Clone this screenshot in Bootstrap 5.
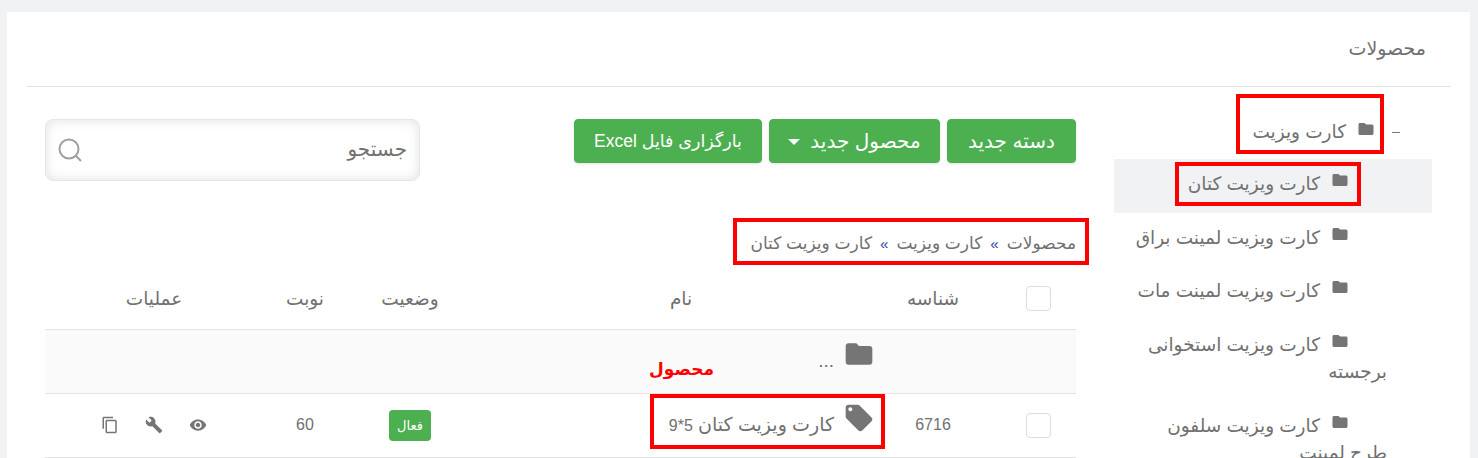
<!DOCTYPE html>
<html lang="fa" dir="rtl">
<head>
  <meta charset="UTF-8">
  <meta name="viewport" content="width=device-width, initial-scale=1.0">
  <title>محصولات</title>
  <link href="https://cdn.jsdelivr.net/npm/bootstrap@5.3.2/dist/css/bootstrap.min.css" rel="stylesheet">
  <style>
    html, body { height: 458px; overflow: hidden; }
    body { background: #f1f2f4; color: #707070; font-family: "Liberation Sans", "DejaVu Sans", sans-serif; font-size: 18px; }
    .sheet { position: relative; margin: 12px 8px 0 7px; height: 446px; background: #fff; overflow: hidden; }
    .sheet-head { margin: 0 19px 0 20px; height: 75px; padding: 24px 25px 0 0; border-bottom: 1px solid #e4e4e4; font-size: 19px; line-height: 26px; }
    .sheet-body { padding: 0 38px; gap: 38px; }
    .tree { width: 318px; flex: none; font-size: 18.5px; }
    .tree-top { height: 72px; padding: 32px 32px 0 0; line-height: 26px; gap: 19px; }
    .tree-dash { width: 8px; height: 1px; background: #777; margin-top: 13px; flex: none; }
    .tree-item { padding: 11px 45px 15px 19px; line-height: 27.5px; text-indent: 40px; }
    .tree-item.is-open { background: #f1f2f4; }
    .ico { fill: #757575; vertical-align: top; }
    .ico-folder { width: 18px; height: 18px; margin: 1px -2px 0 11px; }
    .content { flex: 1; min-width: 0; padding-top: 32px; }
    .btn-row { gap: 7px; }
    .btn-green { --bs-btn-bg: #4caf50; --bs-btn-border-color: #4caf50; --bs-btn-color: #fff; --bs-btn-hover-bg: #4caf50; --bs-btn-hover-border-color: #4caf50; --bs-btn-hover-color: #fff; --bs-btn-border-radius: 4px; height: 44px; padding: 0; font-size: 20px; box-shadow: 0 1px 3px rgba(0,0,0,.12); }
    .btn-new { width: 129px; }
    .btn-product { width: 171px; }
    .btn-product::after { margin-left: 0; margin-right: 10px; vertical-align: .15em; }
    .btn-excel { width: 188px; font-size: 17.5px; }
    .search-box { position: relative; width: 375px; height: 62px; }
    .search-box .form-control { height: 62px; padding: 0 12px 2px 12px; border: 1px solid #e6e6e6; border-radius: 8px; font-size: 20px; box-shadow: inset 0 0 12px rgba(0,0,0,.12); }
    .search-box .form-control::placeholder { color: #707070; }
    .search-ico { position: absolute; left: 12px; top: 18px; width: 26px; height: 26px; fill: none; stroke: #a0a0a0; stroke-width: 2; }
    .crumbs { margin-top: 50px; height: 38px; line-height: 26px; font-size: 17px; }
    .crumbs b { color: #2a3f9d; font-weight: 400; font-size: 15px; margin: 0 8px; }
    .data-table { table-layout: fixed; margin: 0; }
    .data-table th, .data-table td { text-align: center; vertical-align: middle; border-bottom: 1px solid #e4e4e4; padding: 0; font-weight: 400; color: #707070; }
    .data-table th { font-size: 18.5px; }
    .data-table thead tr { height: 60px; }
    .data-table tbody tr { height: 64px; }
    .col-check { width: 99px; }
    .col-id { width: 88px; }
    .col-name { width: 416px; }
    .col-state { width: 126px; }
    .col-turn { width: 84px; }
    .tick { width: 25px; height: 25px; border: 1px solid #ddd; border-radius: 4px; margin: 0 25px 0 auto; }
    .data-table td.num, .num { font-size: 16px; }
    .data-table td.cell-name { text-align: right; padding: 0 14px 0 0; font-size: 19px; }
    .ico-row { width: 32px; height: 32px; margin: -9px 0 0 9px; }
    .row-folder td { background: #fafafa; }
    .state { --bs-badge-font-size: 13px; --bs-badge-font-weight: 400; --bs-badge-padding-x: 8px; --bs-badge-padding-y: 9px; background: #4caf50; border-radius: 4px; }
    .tools { gap: 26px; }
    .ico-tool { width: 18px; height: 18px; }
    .mark-box { position: absolute; border: 4px solid #f00; pointer-events: none; }
    .mark-a { left: 1229px; top: 82px; width: 148px; height: 60px; }
    .mark-b { left: 1168px; top: 150px; width: 186px; height: 44px; }
    .mark-c { left: 726px; top: 206px; width: 356px; height: 47px; }
    .mark-d { left: 643px; top: 382px; width: 235px; height: 55px; }
    .mark-text { position: absolute; left: 642px; top: 345px; color: #f00; font-weight: 700; font-size: 17px; line-height: 26px; }
  </style>
</head>
<body>
  <div class="sheet">
    <div class="sheet-head">محصولات</div>

    <div class="sheet-body d-flex">
      <div class="tree">
        <div class="tree-top d-flex">
          <span class="tree-dash"></span>
          <span><svg class="ico ico-folder" viewBox="0 0 24 24"><path d="M10 4H4c-1.1 0-1.99.9-1.99 2L2 18c0 1.1.9 2 2 2h16c1.1 0 2-.9 2-2V8c0-1.1-.9-2-2-2h-8l-2-2z"/></svg>کارت ویزیت</span>
        </div>
        <div class="tree-item is-open"><svg class="ico ico-folder" viewBox="0 0 24 24"><path d="M10 4H4c-1.1 0-1.99.9-1.99 2L2 18c0 1.1.9 2 2 2h16c1.1 0 2-.9 2-2V8c0-1.1-.9-2-2-2h-8l-2-2z"/></svg>کارت ویزیت کتان</div>
        <div class="tree-item"><svg class="ico ico-folder" viewBox="0 0 24 24"><path d="M10 4H4c-1.1 0-1.99.9-1.99 2L2 18c0 1.1.9 2 2 2h16c1.1 0 2-.9 2-2V8c0-1.1-.9-2-2-2h-8l-2-2z"/></svg>کارت ویزیت لمینت براق</div>
        <div class="tree-item"><svg class="ico ico-folder" viewBox="0 0 24 24"><path d="M10 4H4c-1.1 0-1.99.9-1.99 2L2 18c0 1.1.9 2 2 2h16c1.1 0 2-.9 2-2V8c0-1.1-.9-2-2-2h-8l-2-2z"/></svg>کارت ویزیت لمینت مات</div>
        <div class="tree-item"><svg class="ico ico-folder" viewBox="0 0 24 24"><path d="M10 4H4c-1.1 0-1.99.9-1.99 2L2 18c0 1.1.9 2 2 2h16c1.1 0 2-.9 2-2V8c0-1.1-.9-2-2-2h-8l-2-2z"/></svg>کارت ویزیت استخوانی برجسته</div>
        <div class="tree-item"><svg class="ico ico-folder" viewBox="0 0 24 24"><path d="M10 4H4c-1.1 0-1.99.9-1.99 2L2 18c0 1.1.9 2 2 2h16c1.1 0 2-.9 2-2V8c0-1.1-.9-2-2-2h-8l-2-2z"/></svg>کارت ویزیت سلفون طرح لمینت</div>
      </div>

      <div class="content">
        <div class="d-flex justify-content-between align-items-start">
          <div class="d-flex btn-row">
            <button class="btn btn-green btn-new">دسته جدید</button>
            <button class="btn btn-green btn-product dropdown-toggle">محصول جدید</button>
            <button class="btn btn-green btn-excel">بارگزاری فایل Excel</button>
          </div>
          <div class="search-box">
            <input type="text" class="form-control" placeholder="جستجو">
            <svg class="search-ico" viewBox="0 0 26 26"><circle cx="12" cy="12" r="9.5"/><path d="M19 19l5 5"/></svg>
          </div>
        </div>

        <div class="crumbs">محصولات<b>»</b>کارت ویزیت<b>»</b>کارت ویزیت کتان</div>

        <table class="table data-table">
          <thead>
            <tr>
              <th class="col-check"><div class="tick"></div></th>
              <th class="col-id">شناسه</th>
              <th class="col-name">نام</th>
              <th class="col-state">وضعیت</th>
              <th class="col-turn">نوبت</th>
              <th>عملیات</th>
            </tr>
          </thead>
          <tbody>
            <tr class="row-folder">
              <td></td>
              <td></td>
              <td class="cell-name"><svg class="ico ico-row" viewBox="0 0 24 24"><path d="M10 4H4c-1.1 0-1.99.9-1.99 2L2 18c0 1.1.9 2 2 2h16c1.1 0 2-.9 2-2V8c0-1.1-.9-2-2-2h-8l-2-2z"/></svg>...</td>
              <td></td>
              <td></td>
              <td></td>
            </tr>
            <tr>
              <td><div class="tick"></div></td>
              <td class="num">6716</td>
              <td class="cell-name"><svg class="ico ico-row" viewBox="0 0 24 24"><path d="M21.41 11.58l-9-9C12.05 2.22 11.55 2 11 2H4c-1.1 0-2 .9-2 2v7c0 .55.22 1.05.59 1.42l9 9c.36.36.86.58 1.41.58.55 0 1.05-.22 1.41-.59l7-7c.37-.36.59-.86.59-1.41 0-.55-.23-1.06-.59-1.42zM5.5 7C4.67 7 4 6.33 4 5.5S4.67 4 5.5 4 7 4.67 7 5.5 6.33 7 5.5 7z"/></svg>کارت ویزیت کتان <span class="num">5*9</span></td>
              <td><span class="badge state">فعال</span></td>
              <td class="num">60</td>
              <td>
                <div class="d-flex justify-content-center tools">
                  <svg class="ico ico-tool" viewBox="0 0 24 24"><path d="M12 4.5C7 4.5 2.73 7.61 1 12c1.73 4.39 6 7.5 11 7.5s9.27-3.11 11-7.5c-1.73-4.39-6-7.5-11-7.5zM12 17c-2.76 0-5-2.24-5-5s2.24-5 5-5 5 2.24 5 5-2.24 5-5 5zm0-8c-1.66 0-3 1.34-3 3s1.34 3 3 3 3-1.34 3-3-1.34-3-3-3z"/></svg>
                  <svg class="ico ico-tool" viewBox="0 0 24 24"><path d="M22.7 19l-9.1-9.1c.9-2.3.4-5-1.5-6.9-2-2-5-2.4-7.4-1.3L9 6 6 9 1.6 4.7C.4 7.1.9 10.1 2.9 12.1c1.9 1.9 4.6 2.4 6.9 1.5l9.1 9.1c.4.4 1 .4 1.4 0l2.3-2.3c.5-.4.5-1.1.1-1.4z"/></svg>
                  <svg class="ico ico-tool" viewBox="0 0 24 24"><path d="M16 1H4c-1.1 0-2 .9-2 2v14h2V3h12V1zm3 4H8c-1.1 0-2 .9-2 2v14c0 1.1.9 2 2 2h11c1.1 0 2-.9 2-2V7c0-1.1-.9-2-2-2zm0 16H8V7h11v14z"/></svg>
                </div>
              </td>
            </tr>
          </tbody>
        </table>
      </div>
    </div>

    <div class="mark-box mark-a"></div>
    <div class="mark-box mark-b"></div>
    <div class="mark-box mark-c"></div>
    <div class="mark-box mark-d"></div>
    <div class="mark-text">محصول</div>
  </div>
  <script src="https://cdn.jsdelivr.net/npm/bootstrap@5.3.2/dist/js/bootstrap.bundle.min.js"></script>
</body>
</html>
